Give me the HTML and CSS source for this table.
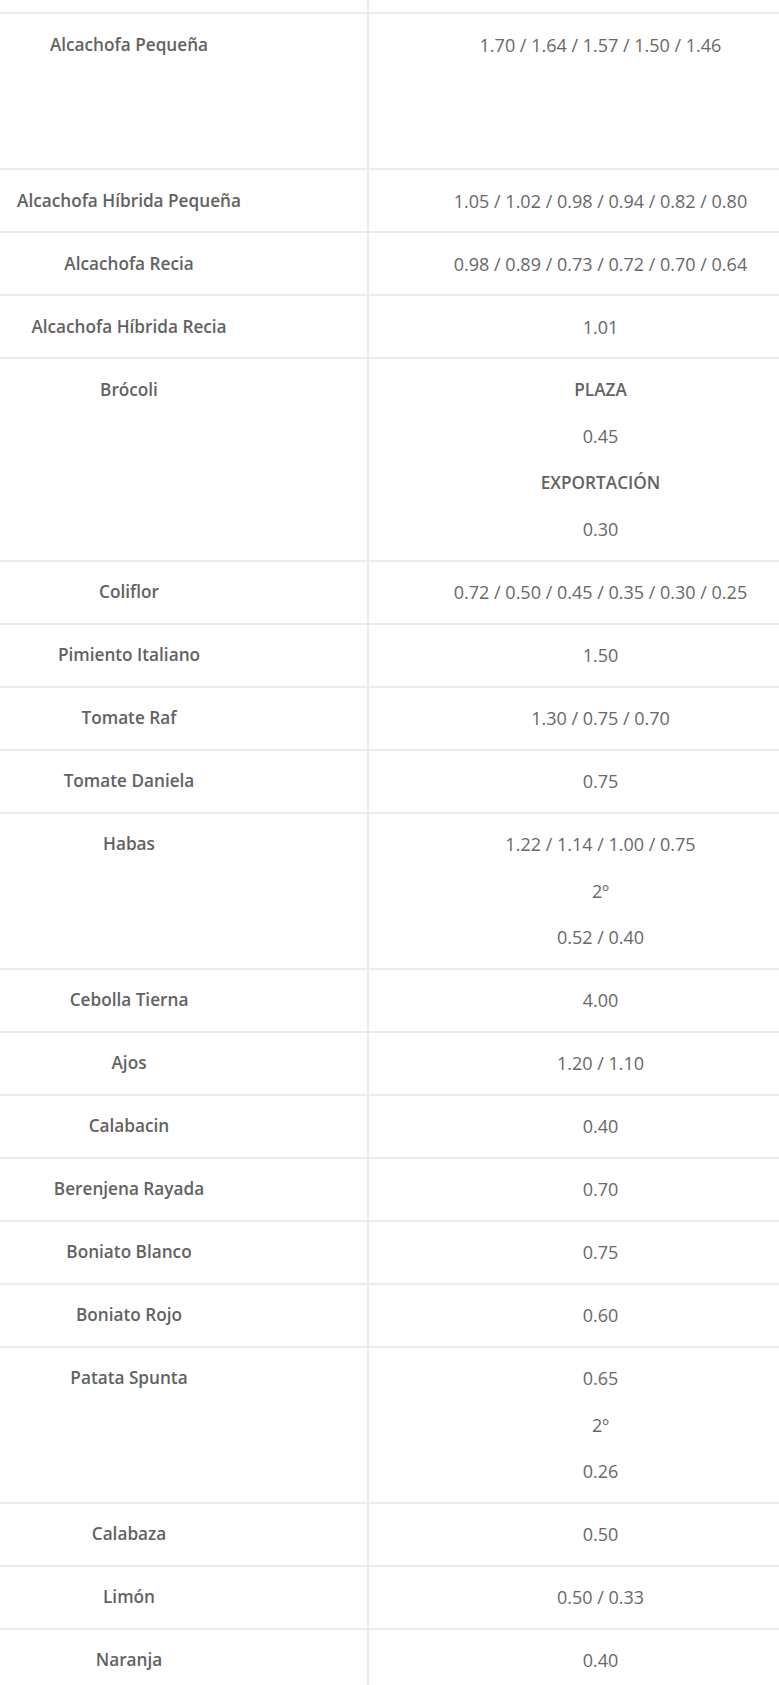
FILE: index.html
```html
<!DOCTYPE html>
<html lang="es">
<head>
<meta charset="utf-8">
<title>Precios</title>
<link rel="stylesheet" href="styles.css">
</head>
<body>
<div class="table">
  <div class="row spacer"><div class="name"></div><div class="val"></div></div>
  <div class="row tall"><div class="name"><p>Alcachofa Pequeña</p></div><div class="val"><p>1.70 / 1.64 / 1.57 / 1.50 / 1.46</p></div></div>
  <div class="row"><div class="name"><p>Alcachofa Híbrida Pequeña</p></div><div class="val"><p>1.05 / 1.02 / 0.98 / 0.94 / 0.82 / 0.80</p></div></div>
  <div class="row"><div class="name"><p>Alcachofa Recia</p></div><div class="val"><p>0.98 / 0.89 / 0.73 / 0.72 / 0.70 / 0.64</p></div></div>
  <div class="row"><div class="name"><p>Alcachofa Híbrida Recia</p></div><div class="val"><p>1.01</p></div></div>
  <div class="row"><div class="name"><p>Brócoli</p></div><div class="val"><p class="label">PLAZA</p><p>0.45</p><p class="label">EXPORTACIÓN</p><p>0.30</p></div></div>
  <div class="row"><div class="name"><p>Coliflor</p></div><div class="val"><p>0.72 / 0.50 / 0.45 / 0.35 / 0.30 / 0.25</p></div></div>
  <div class="row"><div class="name"><p>Pimiento Italiano</p></div><div class="val"><p>1.50</p></div></div>
  <div class="row"><div class="name"><p>Tomate Raf</p></div><div class="val"><p>1.30 / 0.75 / 0.70</p></div></div>
  <div class="row"><div class="name"><p>Tomate Daniela</p></div><div class="val"><p>0.75</p></div></div>
  <div class="row"><div class="name"><p>Habas</p></div><div class="val"><p>1.22 / 1.14 / 1.00 / 0.75</p><p>2º</p><p>0.52 / 0.40</p></div></div>
  <div class="row"><div class="name"><p>Cebolla Tierna</p></div><div class="val"><p>4.00</p></div></div>
  <div class="row"><div class="name"><p>Ajos</p></div><div class="val"><p>1.20 / 1.10</p></div></div>
  <div class="row"><div class="name"><p>Calabacin</p></div><div class="val"><p>0.40</p></div></div>
  <div class="row"><div class="name"><p>Berenjena Rayada</p></div><div class="val"><p>0.70</p></div></div>
  <div class="row"><div class="name"><p>Boniato Blanco</p></div><div class="val"><p>0.75</p></div></div>
  <div class="row"><div class="name"><p>Boniato Rojo</p></div><div class="val"><p>0.60</p></div></div>
  <div class="row"><div class="name"><p>Patata Spunta</p></div><div class="val"><p>0.65</p><p>2º</p><p>0.26</p></div></div>
  <div class="row"><div class="name"><p>Calabaza</p></div><div class="val"><p>0.50</p></div></div>
  <div class="row"><div class="name"><p>Limón</p></div><div class="val"><p>0.50 / 0.33</p></div></div>
  <div class="row"><div class="name"><p>Naranja</p></div><div class="val"><p>0.40</p></div></div>
</div>
</body>
</html>
```
FILE: styles.css
```css
html, body {
  margin: 0;
  padding: 0;
  background: #ffffff;
}
body {
  font-family: "Open Sans", "Noto Sans", sans-serif;
  font-size: 18px;
  color: #686868;
}
.table {
  display: flex;
  flex-direction: column;
}
.row {
  display: grid;
  grid-template-columns: 369px 1fr;
  border-top: 2px solid #ebebeb;
}
.row.spacer {
  border-top: none;
  height: 12px;
}
.row.tall {
  min-height: 154px;
}
.name, .val {
  padding: 17.5px 0;
  text-align: center;
}
.name {
  border-right: 2px solid #ebebeb;
  padding-right: 109px;
  font-size: 17.2px;
  font-weight: 600;
  color: #626262;
}
.val {
  padding-left: 53px;
}
.spacer .name, .spacer .val {
  padding: 0;
}
p {
  margin: 0;
  line-height: 26px;
}
.val p + p {
  margin-top: 20.5px;
}
.label {
  font-size: 17.2px;
  font-weight: 600;
  color: #626262;
}
```
